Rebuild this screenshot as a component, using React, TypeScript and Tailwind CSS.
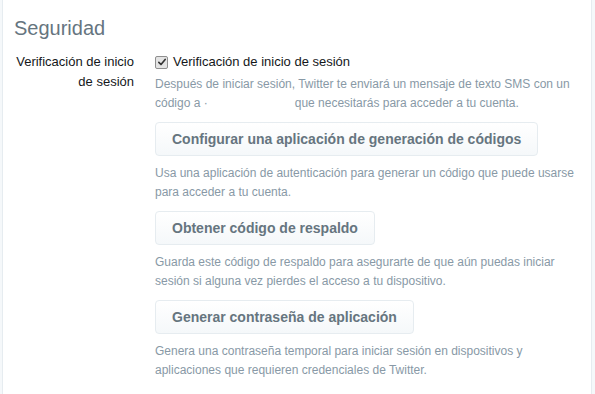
import React from "react";

const font = { fontFamily: '"Liberation Sans", Arial, sans-serif' };

function CheckBox() {
  return (
    <span className="inline-flex h-[13px] w-[13px] items-center justify-center rounded-[2px] border border-[#8f8f8f] bg-[#e4e4e4]">
      <svg viewBox="0 0 12 12" className="h-[10px] w-[10px]">
        <path d="M2.2 6.4 L4.8 9 L9.8 3" fill="none" stroke="#333" strokeWidth="2" strokeLinecap="round" strokeLinejoin="round" />
      </svg>
    </span>
  );
}

function Boton({ children }: { children: React.ReactNode }) {
  return (
    <button className="mt-[10px] h-[34px] rounded-[4px] border border-[#e6ecf0] bg-gradient-to-b from-white to-[#f5f8fa] px-[16px] text-[14px] font-bold text-[#66757f]">
      {children}
    </button>
  );
}

function Descripcion({ children }: { children: React.ReactNode }) {
  return <p className="mt-[8px] text-[12px] leading-[18.5px] text-[#8899a6]">{children}</p>;
}

export default function App() {
  return (
    <div style={font} className="h-[394px] w-[595px] overflow-hidden bg-[#f5f8fa] pl-[2px]">
      <div className="h-full w-[590px] border-x border-[#e6ecf0] bg-white">
        <h2 className="pl-[11px] pt-[16px] text-[20px] leading-[24px] text-[#66757f]">Seguridad</h2>

        <div className="mt-[12px] flex">
          <div className="w-[131px] shrink-0 text-right text-[13px] leading-[20px] text-[#14171a]">
            Verificación de inicio de sesión
          </div>
          <div className="ml-[21px] flex flex-col items-start">
            <label className="flex h-[20px] items-center gap-[5px] text-[13px] text-[#14171a]">
              <CheckBox />
              <span>Verificación de inicio de sesión</span>
            </label>
            <p className="mt-[3px] text-[12px] leading-[18.5px] text-[#8899a6]">
              Después de iniciar sesión, Twitter te enviará un mensaje de texto SMS con un
              <br />
              código a ·<span className="inline-block w-[87px]" />que necesitarás para acceder a tu cuenta.
            </p>

            <Boton>Configurar una aplicación de generación de códigos</Boton>
            <Descripcion>
              Usa una aplicación de autenticación para generar un código que puede usarse
              <br />
              para acceder a tu cuenta.
            </Descripcion>

            <Boton>Obtener código de respaldo</Boton>
            <Descripcion>
              Guarda este código de respaldo para asegurarte de que aún puedas iniciar
              <br />
              sesión si alguna vez pierdes el acceso a tu dispositivo.
            </Descripcion>

            <Boton>Generar contraseña de aplicación</Boton>
            <Descripcion>
              Genera una contraseña temporal para iniciar sesión en dispositivos y
              <br />
              aplicaciones que requieren credenciales de Twitter.
            </Descripcion>
          </div>
        </div>
      </div>
    </div>
  );
}
